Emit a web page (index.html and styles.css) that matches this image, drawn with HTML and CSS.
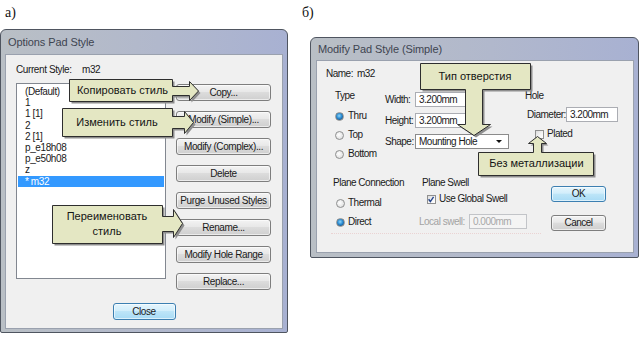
FILE: index.html
```html
<!DOCTYPE html>
<html lang="ru">
<head>
    <meta charset="UTF-8">
    <title>Pad Style</title>
    <link rel="stylesheet" href="styles.css">
</head>
<body>
<div class="page">

    <!-- а) Options Pad Style -->
    <section class="fig fig-a">
        <div class="fig-label">а)</div>
        <div class="dialog dialog-options">
            <div class="dialog-title">Options Pad Style</div>
            <div class="client client-options">
                <div class="current-style"><span class="current-label">Current Style:</span>m32</div>
                <div class="options-main">
                    <ul class="listbox">
                        <li>(Default)</li>
                        <li>1</li>
                        <li>1 [1]</li>
                        <li>2</li>
                        <li>2 [1]</li>
                        <li>p_e18h08</li>
                        <li>p_e50h08</li>
                        <li>z</li>
                        <li class="selected">* m32</li>
                    </ul>
                    <div class="button-col">
                        <div class="btn">Copy...</div>
                        <div class="btn">Modify (Simple)...</div>
                        <div class="btn">Modify (Complex)...</div>
                        <div class="btn">Delete</div>
                        <div class="btn">Purge Unused Styles</div>
                        <div class="btn">Rename...</div>
                        <div class="btn">Modify Hole Range</div>
                        <div class="btn">Replace...</div>
                    </div>
                </div>
                <div class="close-row">
                    <div class="btn btn-default btn-close">Close</div>
                </div>
            </div>
        </div>
    </section>

    <!-- б) Modify Pad Style (Simple) -->
    <section class="fig fig-b">
        <div class="fig-label">б)</div>
        <div class="dialog dialog-modify">
            <div class="dialog-title">Modify Pad Style (Simple)</div>
            <div class="client client-modify">
                <div class="name-row"><span class="name-label">Name:</span><span>m32</span></div>

                <div class="pad-top">
                    <div class="type-group">
                        <div class="group-label">Type</div>
                        <div class="radio-row"><span class="radio checked"></span>Thru</div>
                        <div class="radio-row"><span class="radio"></span>Top</div>
                        <div class="radio-row"><span class="radio"></span>Bottom</div>
                    </div>
                    <div class="size-fields">
                        <span class="field-label">Width:</span>
                        <div class="input input-size">3.200mm</div>
                        <span class="field-label">Height:</span>
                        <div class="input input-size">3.200mm</div>
                        <span class="field-label">Shape:</span>
                        <div class="input select">Mounting Hole<span class="drop"></span></div>
                    </div>
                    <div class="hole-group">
                        <div class="group-label">Hole</div>
                        <div class="diameter-row">
                            <span class="field-label">Diameter:</span>
                            <div class="input input-size">3.200mm</div>
                        </div>
                        <div class="check-row plated"><span class="checkbox"></span>Plated</div>
                    </div>
                </div>

                <div class="pad-bottom">
                    <div class="plane-group">
                        <div class="group-label">Plane Connection</div>
                        <div class="radio-row"><span class="radio"></span>Thermal</div>
                        <div class="radio-row"><span class="radio checked"></span>Direct</div>
                    </div>
                    <div class="swell-group">
                        <div class="group-label swell-label">Plane Swell</div>
                        <div class="check-row global-swell">
                            <span class="checkbox">
                                <svg width="9" height="9" viewBox="0 0 9 9"><path d="M1.8 4.2 L3.8 6.8 L7.4 1.6" fill="none" stroke="#24448c" stroke-width="1.6"/></svg>
                            </span>Use Global Swell
                        </div>
                        <div class="local-swell">
                            <span class="disabled-label">Local swell:</span>
                            <div class="input input-disabled">0.000mm</div>
                        </div>
                    </div>
                    <div class="dialog-buttons">
                        <div class="btn btn-default">OK</div>
                        <div class="btn btn-cancel">Cancel</div>
                    </div>
                </div>
                <div class="swell-rule"></div>
            </div>
        </div>
    </section>

    <!-- Callouts laid over the dialogs -->
    <div class="callout callout-copy">
        <svg width="136" height="28">
            <g transform="translate(.5 .5)">
                <path class="shadow" transform="translate(2 2)" d="M2,1 H105 V8 H122 V3 L131,12.5 L122,22 V17 H105 V23 H2 Z"/>
                <path class="shape" d="M2,1 H105 V8 H122 V3 L131,12.5 L122,22 V17 H105 V23 H2 Z"/>
            </g>
        </svg>
        <span class="callout-text">Копировать стиль</span>
    </div>

    <div class="callout callout-modify">
        <svg width="136" height="33">
            <g transform="translate(.5 .5)">
                <path class="shadow" transform="translate(2 2)" d="M1,1 H111 V9 H123 V4 L132,15 L123,26 V21 H111 V29 H1 Z"/>
                <path class="shape" d="M1,1 H111 V9 H123 V4 L132,15 L123,26 V21 H111 V29 H1 Z"/>
            </g>
        </svg>
        <span class="callout-text">Изменить стиль</span>
    </div>

    <div class="callout callout-rename">
        <svg width="136" height="43">
            <g transform="translate(.5 .5)">
                <path class="shadow" transform="translate(2 2)" d="M1,1 H111 V12 H122 V5 L131,19 L122,33 V27 H111 V39 H1 Z"/>
                <path class="shape" d="M1,1 H111 V12 H122 V5 L131,19 L122,33 V27 H111 V39 H1 Z"/>
            </g>
        </svg>
        <span class="callout-text">Переименовать<br>стиль</span>
    </div>

    <div class="callout callout-hole">
        <svg width="116" height="77">
            <g transform="translate(.5 .5)">
                <path class="shadow" transform="translate(2 2)" d="M1,1 H111 V27 H63 V62 H71 L54.5,73 L38,62 H46 V27 H1 Z"/>
                <path class="shape" d="M1,1 H111 V27 H63 V62 H71 L54.5,73 L38,62 H46 V27 H1 Z"/>
            </g>
        </svg>
        <span class="callout-text">Тип отверстия</span>
    </div>

    <div class="callout callout-plated">
        <svg width="120" height="44">
            <g transform="translate(.5 .5)">
                <path class="shadow" transform="translate(2 2)" d="M1,17 H56 V8 H51 L60,1 L69,8 H64 V17 H116 V40 H1 Z"/>
                <path class="shape" d="M1,17 H56 V8 H51 L60,1 L69,8 H64 V17 H116 V40 H1 Z"/>
            </g>
        </svg>
        <span class="callout-text">Без металлизации</span>
    </div>

</div>
</body>
</html>
```

FILE: styles.css
```css
/* Page: two figures side by side */
body {
    margin: 0;
    background-color: #ffffff;
    font-family: "Liberation Sans", Arial, sans-serif;
    color: #1a1a1a;
}

.page {
    position: relative;
    display: flex;
    width: 642px;
    height: 337px;
    overflow: hidden;
}

.fig-a {
    width: 300px;
}

.fig-b {
    width: 342px;
}

.fig-label {
    font-family: "Liberation Serif", "Times New Roman", serif;
    font-size: 14px;
    line-height: 16px;
    height: 16px;
    padding-top: 5px;
    color: #111;
}

.fig-a .fig-label {
    padding-left: 5px;
}

.fig-b .fig-label {
    padding-left: 2px;
}

/* Window frame */
.dialog {
    box-sizing: border-box;
    display: flex;
    flex-direction: column;
    border: 1px solid #4f5560;
    border-radius: 6px 6px 2px 2px;
    background: linear-gradient(90deg, #b9bfc5 0%, #b1b8cc 55%, #a8b1d2 100%);
    padding: 0 4px 3px 4px;
}

.dialog-options {
    width: 288px;
    height: 304px;
    margin-top: 8px;
}

.dialog-modify {
    width: 329px;
    height: 221px;
    margin-top: 16px;
    margin-left: 10px;
    padding: 0 4px 4px 5px;
}

.dialog-title {
    height: 24px;
    line-height: 24px;
    padding-left: 3px;
    font-size: 11px;
    letter-spacing: -0.1px;
    color: #3e4450;
}

.dialog-modify .dialog-title {
    height: 22px;
    line-height: 22px;
    padding-left: 2px;
}

.client {
    flex: 1;
    position: relative;
    background-color: #f0f0f0;
    border: 1px solid #9aa1ae;
    font-size: 10px;
    letter-spacing: -0.4px;
}

/* Options Pad Style contents */
.client-options {
    padding: 9px 0 0 10px;
}

.current-style {
    height: 12px;
    line-height: 12px;
}

.current-label {
    display: inline-block;
    width: 66px;
}

.options-main {
    display: grid;
    grid-template-columns: 150px 95px;
    column-gap: 10px;
    align-items: start;
    margin-top: 7px;
}

.listbox {
    box-sizing: border-box;
    height: 196px;
    margin: 0;
    padding: 2px 0 0 1px;
    list-style: none;
    background-color: #ffffff;
    border: 1px solid #828790;
}

.listbox li {
    height: 11.2px;
    line-height: 11.2px;
    padding-left: 7px;
    margin-right: 1px;
}

.listbox li.selected {
    background-color: #3399ff;
    color: #ffffff;
}

.button-col {
    display: flex;
    flex-direction: column;
    gap: 10px;
    padding-top: 1px;
}

.btn {
    box-sizing: border-box;
    height: 17px;
    line-height: 15px;
    text-align: center;
    border: 1px solid #7e7e7e;
    border-radius: 3px;
    background: linear-gradient(#f3f3f3 0%, #e8e8e8 45%, #dcdcdc 50%, #cfcfcf 100%);
    box-shadow: inset 0 0 0 1px rgba(255, 255, 255, 0.6);
}

.btn-default {
    border-color: #3c7fb1;
    background: linear-gradient(#e5f5fd 0%, #d2eefb 45%, #bde5f8 50%, #a8dbf5 100%);
}

.close-row {
    display: flex;
    justify-content: center;
    margin: 13px 0 0 -10px;
}

.btn-close {
    width: 63px;
}

/* Modify Pad Style contents */
.client-modify {
    padding: 7px 0 0 9px;
    letter-spacing: -0.5px;
}

.name-row {
    display: flex;
    gap: 4px;
    height: 12px;
    line-height: 12px;
}

.group-label {
    height: 12px;
    line-height: 12px;
}

.pad-top {
    display: grid;
    grid-template-columns: 59px 140px auto;
    margin-top: 10px;
}

.type-group {
    padding-left: 8px;
}

.type-group .group-label {
    padding-left: 1px;
}

.radio-row {
    display: flex;
    align-items: center;
    gap: 4px;
    height: 12px;
    line-height: 12px;
    margin-top: 7px;
}

.type-group .group-label + .radio-row {
    margin-top: 8px;
}

.radio {
    box-sizing: border-box;
    width: 9px;
    height: 9px;
    margin-left: 1px;
    border-radius: 50%;
    border: 1px solid #8e8f8f;
    background: radial-gradient(circle at 40% 40%, #ffffff 0%, #e2e2e2 70%, #cfcfcf 100%);
}

.radio.checked {
    background: radial-gradient(circle at 45% 40%, #8fd6fb 0%, #2a8bd1 45%, #1c5d96 75%, #dcdcdc 80%);
}

.size-fields {
    display: grid;
    grid-template-columns: 30px auto;
    grid-auto-rows: 15px;
    row-gap: 6px;
    align-items: center;
    margin-top: 2px;
}

.input {
    box-sizing: border-box;
    height: 15px;
    line-height: 13px;
    padding-left: 3px;
    background-color: #ffffff;
    border: 1px solid #abadb3;
    white-space: nowrap;
}

.input-size {
    width: 52px;
}

.select {
    position: relative;
    width: 94px;
    border-color: #8b8b8b;
}

.drop {
    position: absolute;
    right: 6px;
    top: 5px;
    border-left: 3px solid transparent;
    border-right: 3px solid transparent;
    border-top: 3px solid #111;
}

.hole-group .diameter-row {
    display: grid;
    grid-template-columns: 39px auto;
    align-items: center;
    margin: 5px 0 0 2px;
}

.check-row {
    display: flex;
    align-items: center;
    gap: 3px;
    height: 12px;
    line-height: 12px;
}

.checkbox {
    box-sizing: border-box;
    display: flex;
    width: 9px;
    height: 9px;
    border: 1px solid #8f8f8f;
    background: linear-gradient(135deg, #dcdcdc 0%, #f6f6f6 60%, #ffffff 100%);
}

.checkbox svg {
    margin: -1px 0 0 -1px;
}

.plated {
    margin: 6px 0 0 10px;
}

.pad-bottom {
    display: grid;
    grid-template-columns: 93px 132px 55px;
    margin-top: 17px;
}

.plane-group {
    padding-left: 7px;
}

.plane-group .radio-row {
    padding-left: 2px;
    gap: 3px;
}

.plane-group .group-label + .radio-row {
    margin-top: 8px;
}

.swell-label {
    padding-left: 3px;
}

.global-swell {
    margin: 4px 0 0 8px;
}

.local-swell {
    display: grid;
    grid-template-columns: 50px auto;
    align-items: center;
    margin-top: 9px;
}

.disabled-label {
    color: #a3a3a3;
}

.input-disabled {
    width: 58px;
    color: #a8a8a8;
    background-color: #f4f4f4;
    border-color: #c2c4c8;
}

.dialog-buttons {
    display: flex;
    flex-direction: column;
    gap: 13px;
    padding-top: 9px;
}

.dialog-buttons .btn {
    height: 16px;
    line-height: 14px;
}

.swell-rule {
    width: 210px;
    margin: 2px 0 0 5px;
    border-top: 1px dotted #ead3d3;
}

/* Callouts */
.callout {
    position: absolute;
    font-family: "Liberation Sans", Arial, sans-serif;
    font-size: 11px;
    color: #141414;
}

.callout svg {
    display: block;
}

.callout .shadow {
    fill: #8e8e8e;
}

.callout .shape {
    fill: #e4e7c3;
    stroke: #2e2e2e;
    stroke-width: 1;
}

.callout-text {
    position: absolute;
    display: flex;
    align-items: center;
    justify-content: center;
    text-align: center;
    line-height: 15px;
}

.callout-copy {
    left: 67px;
    top: 78px;
}

.callout-copy .callout-text {
    left: 4px;
    top: 1px;
    width: 103px;
    height: 22px;
}

.callout-modify {
    left: 61px;
    top: 107px;
}

.callout-modify .callout-text {
    left: 1px;
    top: 1px;
    width: 110px;
    height: 28px;
}

.callout-rename {
    left: 51px;
    top: 204px;
}

.callout-rename .callout-text {
    left: 1px;
    top: 1px;
    width: 110px;
    height: 38px;
}

.callout-hole {
    left: 419px;
    top: 62px;
}

.callout-hole .callout-text {
    left: 1px;
    top: 1px;
    width: 110px;
    height: 26px;
}

.callout-plated {
    left: 477px;
    top: 135px;
}

.callout-plated .callout-text {
    left: 3px;
    top: 17px;
    width: 113px;
    height: 23px;
}
```
